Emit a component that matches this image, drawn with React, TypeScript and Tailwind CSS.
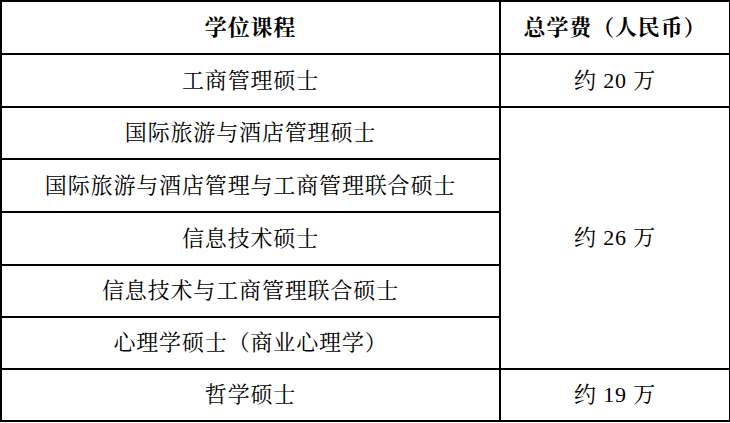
import React from "react";

const font = {
  fontFamily:
    '"Liberation Serif", "Noto Serif CJK SC", "Noto Sans CJK SC", serif',
};

export default function App() {
  const cell =
    "border-2 border-black text-center align-middle text-[22px] leading-none tracking-[0.85px] text-black";
  return (
    <div className="w-[730px] h-[423px] bg-white" style={font}>
      <table className="w-[729px] h-[422px] border-collapse table-fixed">
        <colgroup>
          <col className="w-[499px]" />
          <col className="w-[230px]" />
        </colgroup>
        <tbody>
          <tr className="h-[53px]">
            <td className={`${cell} font-bold`}>学位课程</td>
            <td className={`${cell} font-bold`}>总学费（人民币）</td>
          </tr>
          <tr className="h-[53px]">
            <td className={cell}>工商管理硕士</td>
            <td className={cell}>约 20 万</td>
          </tr>
          <tr className="h-[52px]">
            <td className={cell}>国际旅游与酒店管理硕士</td>
            <td className={cell} rowSpan={5}>
              约 26 万
            </td>
          </tr>
          <tr className="h-[53px]">
            <td className={cell}>国际旅游与酒店管理与工商管理联合硕士</td>
          </tr>
          <tr className="h-[53px]">
            <td className={cell}>信息技术硕士</td>
          </tr>
          <tr className="h-[52px]">
            <td className={cell}>信息技术与工商管理联合硕士</td>
          </tr>
          <tr className="h-[52px]">
            <td className={cell}>心理学硕士（商业心理学）</td>
          </tr>
          <tr className="h-[52px]">
            <td className={cell}>哲学硕士</td>
            <td className={cell}>约 19 万</td>
          </tr>
        </tbody>
      </table>
    </div>
  );
}
